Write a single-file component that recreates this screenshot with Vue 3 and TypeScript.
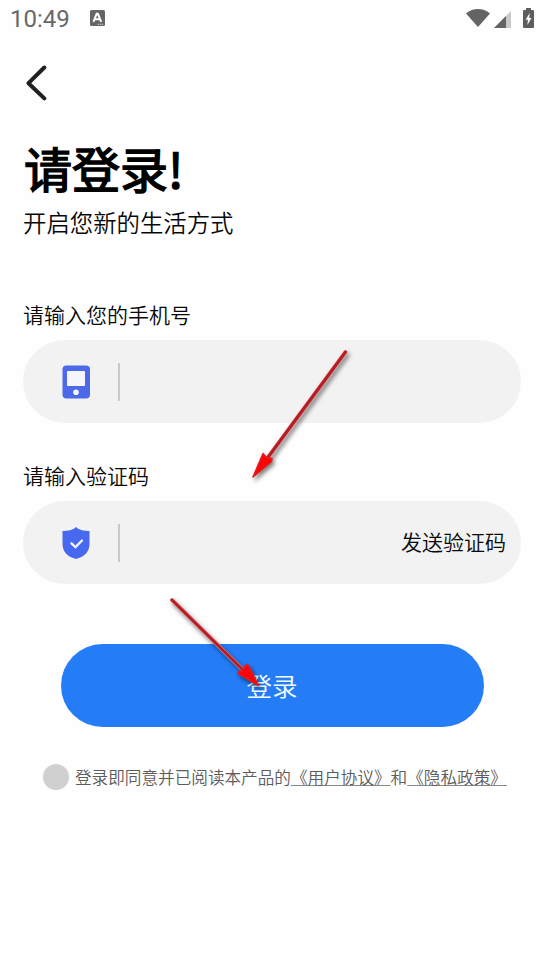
<script setup lang="ts">
import { ref } from 'vue'

interface Field {
  id: string
  label: string
  icon: 'phone' | 'shield'
  action?: string
}

const fields: Field[] = [
  { id: 'phone', label: '请输入您的手机号', icon: 'phone' },
  { id: 'code', label: '请输入验证码', icon: 'shield', action: '发送验证码' },
]
const values = ref<Record<string, string>>({ phone: '', code: '' })
const agreed = ref(false)
</script>

<template>
  <main class="screen">
    <header class="status">
      <span class="time">10:49</span>
      <svg class="badge" width="15" height="16" viewBox="0 0 15 16">
        <rect width="15" height="16" rx="1.5" fill="#666" />
        <path d="M3.4 11.8 6.7 3.8h1.2l3.3 8M5 9.300h4.600" fill="none" stroke="#fff" stroke-width="2" />
        <path d="M7.5 14.300h6" stroke="#ccc" stroke-width="1" stroke-dasharray="1.5 .6" />
      </svg>
      <svg class="wifi" width="24" height="18" viewBox="0 0 24 18">
        <path d="M0 4.4C7-1.4 17-1.4 24 4.4L12 18Z" fill="#646464" />
      </svg>
      <svg class="signal" width="17" height="17" viewBox="0 0 17 17">
        <path d="M17 0V17H0Z" fill="#c9c9c9" />
        <path d="M12 5V17H0Z" fill="#646464" />
      </svg>
      <svg class="battery" width="11" height="20" viewBox="0 0 11 20">
        <path d="M3 0h5v2h2q1 0 1 1v16q0 1-1 1H1q-1 0-1-1V3q0-1 1-1h2Z" fill="#5e5e5e" />
        <path d="M6.7 5 2.6 11.7h2.3L4.4 17 8.5 10H6.2Z" fill="#fff" />
      </svg>
    </header>

    <button class="back" type="button" aria-label="返回">
      <svg width="22" height="36" viewBox="0 0 22 36">
        <path d="M18.3 2.5 2.5 18.2 18.3 33.4" fill="none" stroke="#202020" stroke-width="4" stroke-linecap="round" stroke-linejoin="round" />
      </svg>
    </button>

    <h1>请登录!</h1>
    <p class="subtitle">开启您新的生活方式</p>

    <form @submit.prevent>
      <section v-for="f in fields" :key="f.id" class="field">
        <label :for="f.id">{{ f.label }}</label>
        <div class="box">
          <svg v-if="f.icon === 'phone'" width="28" height="34" viewBox="0 0 28 34">
            <rect x=".5" y=".5" width="27.500" height="33" rx="4" fill="#4b69e8" />
            <rect x="5" y="6" width="18" height="15" rx=".8" fill="#f5f6fb" />
            <circle cx="14" cy="27.3" r="2.8" fill="#f5f6fb" />
          </svg>
          <svg v-else width="28" height="34" viewBox="0 0 28 34">
            <path d="M14 1C11 4 6 5 .5 5V18C.5 26 6 31 14 33C22 31 27.500 26 27.500 18V5C22 5 17 4 14 1Z" fill="#4769f0" />
            <path d="m9.500 17.300 4 3.800 6.500-6.600" fill="none" stroke="#f3f5ff" stroke-width="2.300" stroke-linecap="round" />
          </svg>
          <i class="divider"></i>
          <input :id="f.id" v-model="values[f.id]" type="text" />
          <button v-if="f.action" class="send" type="button">{{ f.action }}</button>
        </div>
      </section>
      <button class="login" type="submit">登录</button>
    </form>

    <div class="agreement">
      <button class="radio" type="button" role="checkbox" :aria-checked="agreed" aria-label="同意" @click="agreed = !agreed"></button>
      <p>登录即同意并已阅读本产品的<u>《用户协议》</u>和<u>《隐私政策》</u></p>
    </div>

    <svg class="arrows" width="544" height="968" viewBox="0 0 544 968">
      <g class="arrow">
        <path d="M345.500 352 266 460" class="halo" />
        <path d="M345.500 352 266 460" class="shaft" />
        <path d="M253 477 263 453.500 266.500 457.500 272 458.500 271.500 461.500Z" class="head" />
      </g>
      <g class="arrow">
        <path d="M172 600 243 670" class="halo" />
        <path d="M172 600 243 670" class="shaft" />
        <path d="M258.500 685.500 237.500 673 242.500 670 246.500 664.500 248.500 665.500Z" class="head" />
      </g>
    </svg>
  </main>
</template>

<style>
body {
  margin: 0;
  background: #fefefe;
}
</style>

<style scoped>
.screen {
  position: relative;
  box-sizing: border-box;
  width: 544px;
  height: 968px;
  overflow: hidden;
  background: #fefefe;
  color: #080808;
  font-family: "Noto Sans CJK SC", sans-serif;
  font-weight: 350;
}
button {
  padding: 0;
  border: 0;
  background: none;
  color: inherit;
  font: inherit;
}
svg {
  display: block;
  flex: none;
}
.status {
  display: flex;
  align-items: center;
  height: 36px;
  padding: 0 10px 0 10px;
}
.time {
  width: 80px;
  color: #686868;
  font: 24px/36px Roboto, sans-serif;
  padding-top: 2px;
}
.wifi {
  margin-left: auto;
}
.signal {
  margin: 2px 12px 0 4px;
}
.back {
  display: block;
  margin: 29px 0 0 26px;
}
h1 {
  height: 70px;
  margin: 31px 0 0 24px;
  color: #000;
  font-size: 48px;
  font-weight: 400;
  line-height: 70px;
  -webkit-text-stroke: 1.500px #000;
}
.subtitle {
  margin: 3px 0 0 23px;
  font-size: 23.4px;
  line-height: 34px;
}
form {
  padding: 59px 23px 0;
}
.field {
  height: 161px;
}
.field label {
  display: block;
  height: 41.500px;
  font-size: 21px;
  line-height: 32px;
}
.box {
  display: flex;
  align-items: center;
  box-sizing: border-box;
  height: 83px;
  padding: 1px 15px 0 39px;
  border-radius: 42px;
  background: #f2f2f2;
}
.divider {
  width: 2px;
  height: 38px;
  margin-left: 28px;
  background: #c9c9c9;
}
input {
  flex: 1;
  min-width: 0;
  height: 50px;
  padding: 0 12px;
  border: 0;
  outline: 0;
  background: transparent;
  font: inherit;
  font-size: 21px;
}
.send {
  padding-bottom: 4px;
  font-size: 21px;
  line-height: 32px;
}
.login {
  display: block;
  width: 423px;
  height: 83px;
  margin: 23.500px auto 0 37.500px;
  padding-bottom: 1px;
  border-radius: 42px;
  background: #247cf7;
  color: #f4ffff;
  font-size: 25.500px;
}
.agreement {
  display: flex;
  align-items: center;
  height: 28px;
  margin: 36px 0 0 43px;
}
.radio {
  width: 26px;
  height: 26px;
  margin-right: 6px;
  border-radius: 50%;
  background: #d0d0d0;
}
.agreement p {
  margin: 0;
  color: #5c5c5c;
  font-size: 16.620px;
  line-height: 28px;
  white-space: nowrap;
}
.agreement u {
  text-decoration-color: #888;
  text-decoration-thickness: 1px;
  text-decoration-skip-ink: none;
  text-underline-offset: 1px;
}
.arrows {
  position: absolute;
  inset: 0;
  pointer-events: none;
}
.arrow {
  filter: drop-shadow(2px 3px 2px rgba(0, 0, 0, 0.5));
}
.halo,
.shaft {
  fill: none;
  stroke-linecap: round;
}
.halo {
  stroke: #e98f93;
  stroke-width: 4;
}
.shaft {
  stroke: #b51d24;
  stroke-width: 3;
}
.head {
  fill: #f90505;
  stroke: #e7191e;
  stroke-width: 1.500;
  stroke-linejoin: round;
}
</style>
